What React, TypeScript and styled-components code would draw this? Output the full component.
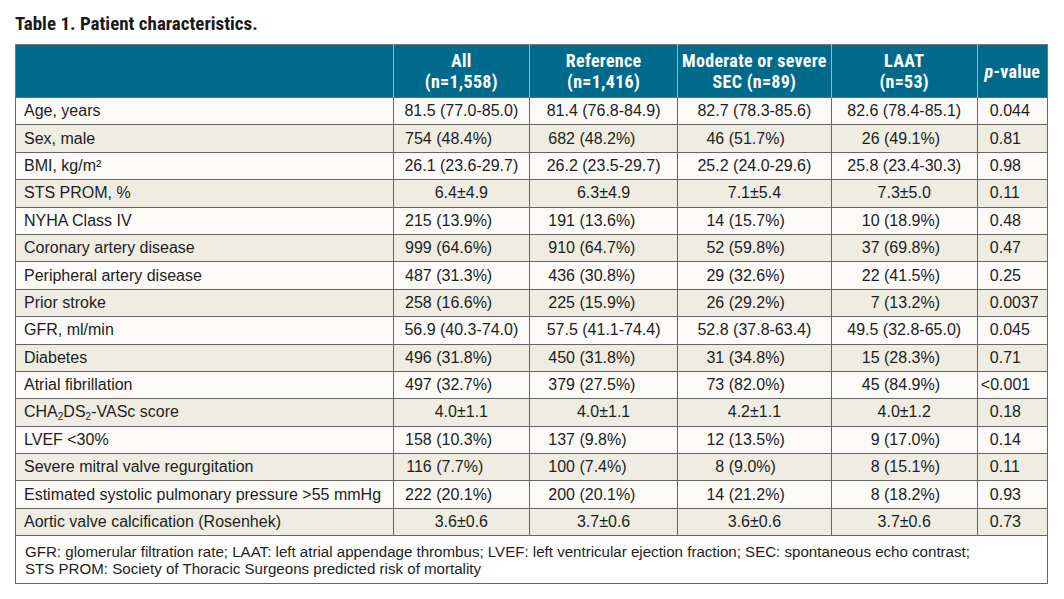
import React from "react";
import styled, { createGlobalStyle } from "styled-components";

type Row = {
  label: React.ReactNode;
  values: string[];
  p: string;
};

const GlobalStyle = createGlobalStyle`
  html, body {
    margin: 0;
    background: #ffffff;
  }
  body {
    font-family: "Liberation Sans", Arial, sans-serif;
    color: #211d1e;
  }
`;

const Page = styled.div`
  padding: 13px 16px 0 15px;
  width: 1033px;
`;

const Title = styled.h1`
  margin: 0 0 9px;
  font-family: "Roboto Condensed", Roboto, "Liberation Sans", sans-serif;
  font-weight: 700;
  font-size: 19px;
  line-height: 22px;
  letter-spacing: 0;
  color: #1a1a1a;
`;

const Table = styled.table`
  width: 1033px;
  border-collapse: collapse;
  table-layout: fixed;
  border: 1.5px solid #777;
  font-size: 16px;
`;

const Col = styled.col<{ $w: number }>`
  width: ${({ $w }) => $w}px;
`;

const HeadRow = styled.tr`
  background: #006a8d;
  height: 53px;
`;

const HeadCell = styled.th`
  padding: 0;
  border-left: 1px solid #8fb7c8;
  color: #ffffff;
  font-family: "Roboto Condensed", Roboto, "Liberation Sans", sans-serif;
  font-weight: 700;
  font-size: 18px;
  line-height: 21px;
  letter-spacing: 0.3px;
  text-align: center;
  vertical-align: middle;
  white-space: nowrap;

  &:first-child {
    border-left: none;
  }
`;

const BodyRow = styled.tr<{ $shade: boolean }>`
  background: ${({ $shade }) => ($shade ? "#efede1" : "#fbfaf7")};
  height: 27.4px;
`;

const Cell = styled.td<{ $align?: "left" | "center" }>`
  padding: 0 0 0 8px;
  border: 1px solid #666;
  text-align: ${({ $align }) => $align || "center"};
  vertical-align: middle;
  white-space: nowrap;
  line-height: 18px;
`;

const Label = styled(Cell)`
  padding-left: 8px;
`;

const ValueCell = styled(Cell)`
  padding: 0;
`;

const PCell = styled(Cell)`
  padding-left: 12px;
`;

const Lead = styled.span<{ $w: number }>`
  display: inline-block;
  width: ${({ $w }) => $w}px;
  text-align: right;
`;

const Pct = styled.div`
  text-align: left;
`;

const Less = styled.span`
  margin-left: -9px;
`;

const Footer = styled.td`
  padding: 7px 8px 6px 9px;
  border: 1px solid #666;
  background: #ffffff;
  font-size: 15.1px;
  line-height: 17px;
  text-align: left;
`;

const SubText = styled.sub`
  font-size: 10px;
  line-height: 0;
  vertical-align: -3px;
`;

const colWidths = [377, 136, 148, 153, 146, 70];
// width of the right-aligned number before "(xx%)" per value column
const leadWidths = [38, 45, 46, 48];

const rows: Row[] = [
  { label: "Age, years", values: ["81.5 (77.0-85.0)", "81.4 (76.8-84.9)", "82.7 (78.3-85.6)", "82.6 (78.4-85.1)"], p: "0.044" },
  { label: "Sex, male", values: ["754 (48.4%)", "682 (48.2%)", "46 (51.7%)", "26 (49.1%)"], p: "0.81" },
  { label: "BMI, kg/m²", values: ["26.1 (23.6-29.7)", "26.2 (23.5-29.7)", "25.2 (24.0-29.6)", "25.8 (23.4-30.3)"], p: "0.98" },
  { label: "STS PROM, %", values: ["6.4±4.9", "6.3±4.9", "7.1±5.4", "7.3±5.0"], p: "0.11" },
  { label: "NYHA Class IV", values: ["215 (13.9%)", "191 (13.6%)", "14 (15.7%)", "10 (18.9%)"], p: "0.48" },
  { label: "Coronary artery disease", values: ["999 (64.6%)", "910 (64.7%)", "52 (59.8%)", "37 (69.8%)"], p: "0.47" },
  { label: "Peripheral artery disease", values: ["487 (31.3%)", "436 (30.8%)", "29 (32.6%)", "22 (41.5%)"], p: "0.25" },
  { label: "Prior stroke", values: ["258 (16.6%)", "225 (15.9%)", "26 (29.2%)", "7 (13.2%)"], p: "0.0037" },
  { label: "GFR, ml/min", values: ["56.9 (40.3-74.0)", "57.5 (41.1-74.4)", "52.8 (37.8-63.4)", "49.5 (32.8-65.0)"], p: "0.045" },
  { label: "Diabetes", values: ["496 (31.8%)", "450 (31.8%)", "31 (34.8%)", "15 (28.3%)"], p: "0.71" },
  { label: "Atrial fibrillation", values: ["497 (32.7%)", "379 (27.5%)", "73 (82.0%)", "45 (84.9%)"], p: "<0.001" },
  {
    label: (
      <>
        CHA<SubText>2</SubText>DS<SubText>2</SubText>-VASc score
      </>
    ),
    values: ["4.0±1.1", "4.0±1.1", "4.2±1.1", "4.0±1.2"],
    p: "0.18",
  },
  { label: "LVEF <30%", values: ["158 (10.3%)", "137 (9.8%)", "12 (13.5%)", "9 (17.0%)"], p: "0.14" },
  { label: "Severe mitral valve regurgitation", values: ["116 (7.7%)", "100 (7.4%)", "8 (9.0%)", "8 (15.1%)"], p: "0.11" },
  { label: "Estimated systolic pulmonary pressure >55 mmHg", values: ["222 (20.1%)", "200 (20.1%)", "14 (21.2%)", "8 (18.2%)"], p: "0.93" },
  { label: "Aortic valve calcification (Rosenhek)", values: ["3.6±0.6", "3.7±0.6", "3.6±0.6", "3.7±0.6"], p: "0.73" },
];

function Value({ text, col }: { text: string; col: number }) {
  const m = text.match(/^(\d+) (\(\d+\.\d+%\))$/);
  if (m) {
    return (
      <ValueCell>
        <Pct>
          <Lead $w={leadWidths[col]}>{m[1]}</Lead> {m[2]}
        </Pct>
      </ValueCell>
    );
  }
  return <ValueCell>{text}</ValueCell>;
}

export default function App() {
  return (
    <>
      <GlobalStyle />
      <Page>
        <Title>Table 1. Patient characteristics.</Title>
        <Table>
          <colgroup>
            {colWidths.map((w, i) => (
              <Col key={i} $w={w} />
            ))}
          </colgroup>
          <thead>
            <HeadRow>
              <HeadCell />
              <HeadCell>
                All
                <br />
                (n=1,558)
              </HeadCell>
              <HeadCell>
                Reference
                <br />
                (n=1,416)
              </HeadCell>
              <HeadCell>
                Moderate or severe
                <br />
                SEC (n=89)
              </HeadCell>
              <HeadCell>
                LAAT
                <br />
                (n=53)
              </HeadCell>
              <HeadCell>
                <i>p</i>-value
              </HeadCell>
            </HeadRow>
          </thead>
          <tbody>
            {rows.map((row, i) => (
              <BodyRow key={i} $shade={i % 2 === 1}>
                <Label $align="left">{row.label}</Label>
                {row.values.map((v, j) => (
                  <Value key={j} text={v} col={j} />
                ))}
                <PCell $align="left">
                  {row.p.startsWith("<") ? (
                    <>
                      <Less>&lt;</Less>
                      {row.p.slice(1)}
                    </>
                  ) : (
                    row.p
                  )}
                </PCell>
              </BodyRow>
            ))}
            <tr>
              <Footer colSpan={6}>
                GFR: glomerular filtration rate; LAAT: left atrial appendage thrombus; LVEF: left
                ventricular ejection fraction; SEC: spontaneous echo contrast;
                <br />
                STS PROM: Society of Thoracic Surgeons predicted risk of mortality
              </Footer>
            </tr>
          </tbody>
        </Table>
      </Page>
    </>
  );
}
